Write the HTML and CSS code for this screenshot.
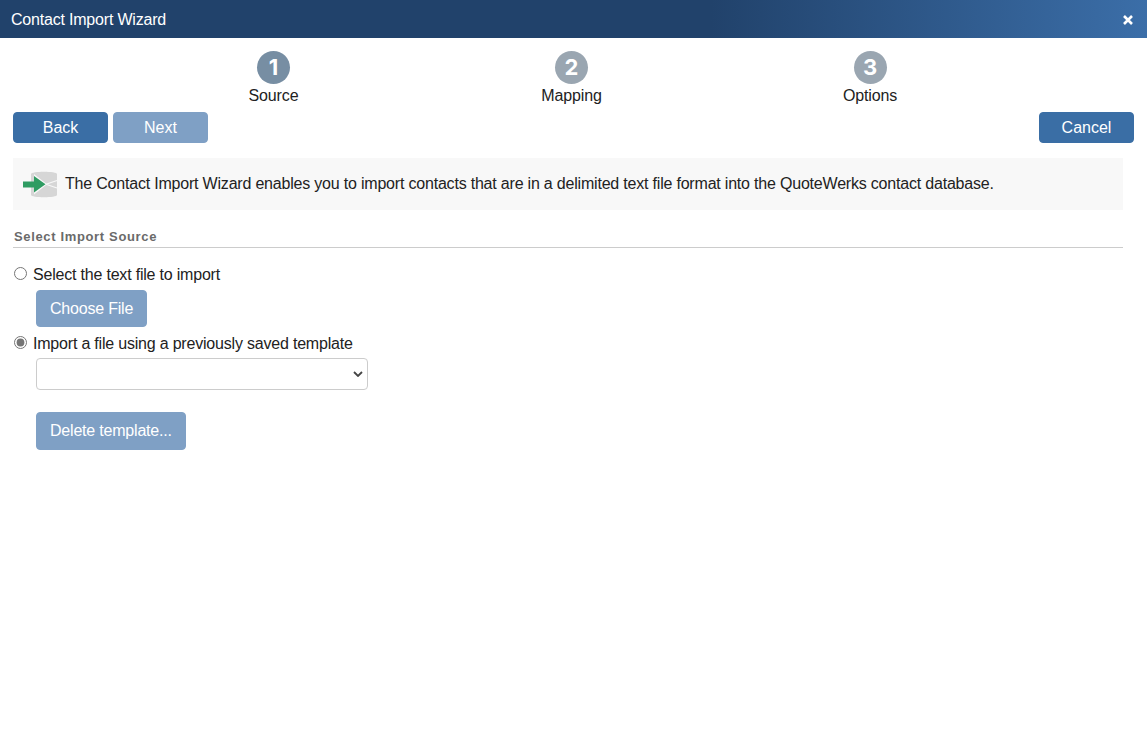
FILE: index.html
```html
<!DOCTYPE html>
<html lang="en">
<head>
    <meta charset="UTF-8">
    <meta name="viewport" content="width=device-width, initial-scale=1.0">
    <title>Contact Import Wizard</title>
    <link rel="stylesheet" href="styles.css">
</head>
<body>
    <div class="titlebar">
        <span class="titlebar-text">Contact Import Wizard</span>
        <svg class="close-icon" width="12" height="12" viewBox="0 0 12 12" aria-label="Close">
            <path d="M2 2 L10 10 M10 2 L2 10" stroke="#fff" stroke-width="2.6" fill="none"/>
        </svg>
    </div>

    <!-- Wizard steps -->
    <div class="steps">
        <div class="step active">
            <div class="step-circle">1</div>
            <div class="step-label">Source</div>
        </div>
        <div class="step">
            <div class="step-circle">2</div>
            <div class="step-label">Mapping</div>
        </div>
        <div class="step">
            <div class="step-circle">3</div>
            <div class="step-label">Options</div>
        </div>
    </div>

    <div class="toolbar">
        <div class="toolbar-left">
            <button class="btn wizard-btn">Back</button>
            <button class="btn wizard-btn disabled">Next</button>
        </div>
        <button class="btn wizard-btn">Cancel</button>
    </div>

    <div class="content">
        <div class="info-box">
            <svg class="info-icon" width="35" height="27" viewBox="0 0 35 27">
                <!-- database -->
                <path d="M8 3 C8 0 34 0 34 3 V24 C34 27 8 27 8 24 Z" fill="#d6d6d6"/>
                <path d="M11 3 L24 13.25 L11 23.5 Z" fill="#f8f8f8"/>
                <path d="M23 13.25 L34 9.5 M23 13.25 L34 17" stroke="#f8f8f8" stroke-width="1.3" fill="none"/>
                <!-- arrow -->
                <path d="M0 10.5 H11 V5 L22.5 13.25 L11 21.5 V16.5 H0 Z" fill="#2f9c62"/>
            </svg>
            <span>The Contact Import Wizard enables you to import contacts that are in a delimited text file format into the QuoteWerks contact database.</span>
        </div>

        <div class="section-title">Select Import Source</div>

        <label class="radio-row first">
            <input type="radio" name="source">
            <span>Select the text file to import</span>
        </label>
        <div class="indent">
            <button class="btn form-btn disabled">Choose File</button>
        </div>

        <label class="radio-row">
            <input type="radio" name="source" checked>
            <span>Import a file using a previously saved template</span>
        </label>
        <div class="select-wrap">
            <select class="template-select"></select>
        </div>
        <div class="indent">
            <button class="btn form-btn delete-btn disabled">Delete template...</button>
        </div>
    </div>
</body>
</html>
```

FILE: styles.css
```css
/* Basic reset and styles */
* {
    margin: 0;
    padding: 0;
    box-sizing: border-box;
    font-family: "Liberation Sans", Arial, sans-serif;
}

body {
    background-color: #fff;
    color: #222;
    font-size: 16px;
    letter-spacing: -0.2px;
}

/* Title bar */
.titlebar {
    height: 38px;
    padding: 1px 13px 0 11px;
    display: flex;
    align-items: center;
    justify-content: space-between;
    color: #fff;
    background: linear-gradient(to right, #21426b 0%, #21426b 62%, #3b6ea8 100%);
}

/* Wizard steps */
.steps {
    display: grid;
    grid-template-columns: 297px 299px 298px;
    padding: 13px 0 0 125px;
}

.step {
    display: flex;
    flex-direction: column;
    align-items: center;
}

.step-circle {
    width: 33px;
    height: 33px;
    border-radius: 50%;
    background-color: #9aa6b1;
    color: #fff;
    font-family: Inter, sans-serif;
    font-size: 22px;
    font-weight: 700;
    letter-spacing: 0;
    line-height: 33px;
    text-align: center;
}

.step.active .step-circle {
    background-color: #778ea3;
}

.step-label {
    letter-spacing: -0.15px;
    line-height: 18px;
    margin-top: 3px;
}

/* Buttons */
.btn {
    border: 1px solid #3a6ea5;
    border-radius: 4px;
    background-color: #3a6ea5;
    color: #fff;
    font-size: 16px;
}

.btn.disabled {
    background-color: #7fa0c5;
    border-color: #7fa0c5;
}

.toolbar {
    display: flex;
    justify-content: space-between;
    padding: 7px 13px 0;
}

.toolbar-left {
    display: flex;
    gap: 5px;
}

.wizard-btn {
    width: 95px;
    height: 31px;
}

.form-btn {
    padding: 0 13px;
    height: 37px;
    letter-spacing: -0.2px;
}

.delete-btn {
    height: 38px;
    margin-top: 16px;
}

/* Main content */
.content {
    padding: 15px 24px 0 13px;
}

.info-box {
    height: 52px;
    padding-left: 10px;
    display: flex;
    align-items: center;
    gap: 7px;
    background-color: #f8f8f8;
}

.section-title {
    margin-top: 19px;
    padding: 0 0 3px 1px;
    border-bottom: 1px solid #ccc;
    color: #6a6a6a;
    font-size: 13px;
    font-weight: bold;
    letter-spacing: 0.65px;
    line-height: 15px;
}

.radio-row {
    display: flex;
    align-items: center;
    height: 18px;
    margin-top: 8px;
}

.radio-row.first {
    margin-top: 18px;
}

.radio-row input {
    width: 13px;
    height: 13px;
    margin: 0 6px 4px 1px;
    accent-color: #757575;
}

.indent {
    padding-left: 23px;
    margin-top: 6px;
}

.select-wrap {
    padding-left: 23px;
    margin-top: 5px;
}

.template-select {
    display: block;
    width: 332px;
    height: 32px;
    appearance: none;
    background: #fff url("data:image/svg+xml,%3Csvg xmlns='http://www.w3.org/2000/svg' width='10' height='6'%3E%3Cpath d='M1 1 L5 5 L9 1' stroke='%23444' stroke-width='1.8' fill='none'/%3E%3C/svg%3E") no-repeat right 4px center;
    border: 1px solid #ccc;
    border-radius: 4px;
}
```
